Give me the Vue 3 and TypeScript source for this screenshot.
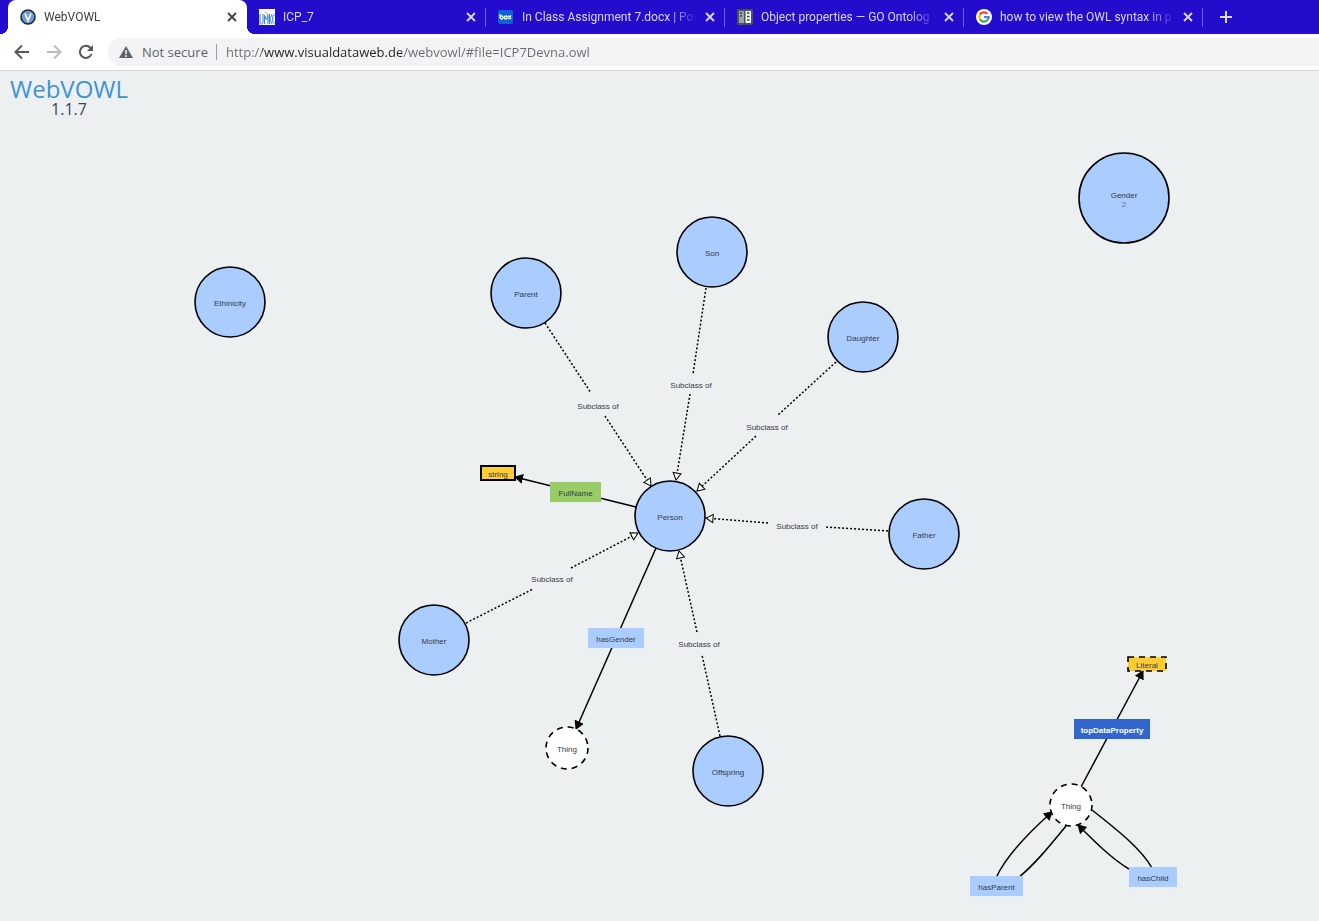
<script setup lang="ts">
import { ref } from 'vue'

interface Tab { id: string; title: string }
interface ClassNode { label: string; x: number; y: number; r: number; kind: 'class' | 'thing'; count?: number }
interface Box { label: string; x: number; y: number; w: number; h: number; kind: string }
interface Edge { d: string; kind: 'solid' | 'dotted'; arrow?: 'filled' | 'hollow' }
interface Caption { x: number; y: number }

const tabs: Tab[] = [
  { id: 'vowl', title: 'WebVOWL' },
  { id: 'umkc', title: 'ICP_7' },
  { id: 'box', title: 'In Class Assignment 7.docx | Pow' },
  { id: 'go', title: 'Object properties — GO Ontolog' },
  { id: 'google', title: 'how to view the OWL syntax in p' },
]
const active = ref('vowl')
const address = ref('http://www.visualdataweb.de/webvowl/#file=ICP7Devna.owl')

const nodes: ClassNode[] = [
  { label: 'Person', x: 670, y: 516, r: 35, kind: 'class' },
  { label: 'Ethinicity', x: 230, y: 302, r: 35, kind: 'class' },
  { label: 'Parent', x: 526, y: 293, r: 35, kind: 'class' },
  { label: 'Son', x: 712, y: 252, r: 35, kind: 'class' },
  { label: 'Daughter', x: 863, y: 337, r: 35, kind: 'class' },
  { label: 'Father', x: 924, y: 534, r: 35, kind: 'class' },
  { label: 'Mother', x: 434, y: 640, r: 35, kind: 'class' },
  { label: 'Offspring', x: 728, y: 771, r: 35, kind: 'class' },
  { label: 'Gender', x: 1124, y: 198, r: 45, kind: 'class', count: 2 },
  { label: 'Thing', x: 567, y: 748, r: 21, kind: 'thing' },
  { label: 'Thing', x: 1071, y: 805, r: 21, kind: 'thing' },
]

const boxes: Box[] = [
  { label: 'string', x: 481, y: 466, w: 34, h: 14, kind: 'datatype' },
  { label: 'Literal', x: 1128, y: 657, w: 38, h: 14, kind: 'literal' },
  { label: 'FullName', x: 550, y: 482, w: 51, h: 20, kind: 'data-property' },
  { label: 'hasGender', x: 588, y: 628, w: 56, h: 20, kind: 'object-property' },
  { label: 'topDataProperty', x: 1074, y: 719, w: 76, h: 20, kind: 'external' },
  { label: 'hasParent', x: 970, y: 876, w: 53, h: 20, kind: 'object-property' },
  { label: 'hasChild', x: 1129, y: 867, w: 48, h: 20, kind: 'object-property' },
]

const edges: Edge[] = [
  { d: 'M545 323L591 393', kind: 'dotted' },
  { d: 'M605 416L651 486', kind: 'dotted', arrow: 'hollow' },
  { d: 'M706 288L693 374', kind: 'dotted' },
  { d: 'M690 394L676 480', kind: 'dotted', arrow: 'hollow' },
  { d: 'M836 362L777 416', kind: 'dotted' },
  { d: 'M756 436L697 491', kind: 'dotted', arrow: 'hollow' },
  { d: 'M888 531L826 527', kind: 'dotted' },
  { d: 'M768 523L706 518', kind: 'dotted', arrow: 'hollow' },
  { d: 'M466 623L533 589', kind: 'dotted' },
  { d: 'M571 568L638 533', kind: 'dotted', arrow: 'hollow' },
  { d: 'M720 736L702 655', kind: 'dotted' },
  { d: 'M697 632L679 551', kind: 'dotted', arrow: 'hollow' },
  { d: 'M636 507L515 477', kind: 'solid', arrow: 'filled' },
  { d: 'M656 548L576 729', kind: 'solid', arrow: 'filled' },
  { d: 'M1081 787L1143 671', kind: 'solid', arrow: 'filled' },
  { d: 'M996 878C1006 856 1026 835 1052 812', kind: 'solid', arrow: 'filled' },
  { d: 'M1066 826C1048 848 1034 865 1018 878', kind: 'solid' },
  { d: 'M1092 810C1120 832 1142 850 1152 868', kind: 'solid' },
  { d: 'M1129 869C1112 859 1094 841 1078 825', kind: 'solid', arrow: 'filled' },
]

const subclassCaptions: Caption[] = [
  { x: 598, y: 409 },
  { x: 691, y: 388 },
  { x: 767, y: 430 },
  { x: 797, y: 529 },
  { x: 552, y: 582 },
  { x: 699, y: 647 },
]
</script>

<template>
  <div class="window">
    <header>
      <nav class="tab-strip" aria-label="Tabs">
        <div v-for="t in tabs" :key="t.id" class="tab" :class="{ active: t.id === active }">
          <button class="tab-main" type="button" @click="active = t.id">
            <svg class="favicon" viewBox="0 0 16 16" aria-hidden="true">
              <g v-if="t.id === 'vowl'">
                <circle cx="8" cy="8" r="7" fill="#6d9bd3" stroke="#1d2c42" stroke-width="1.6" />
                <path d="M5 4.5L8 11.5L11 4.5" fill="none" stroke="#fff" stroke-width="1.8" />
              </g>
              <g v-else-if="t.id === 'umkc'">
                <rect width="16" height="16" fill="#f6faff" />
                <path d="M1 5V13Q1 15 2.5 15Q4 15 4 13V5M5.5 15V6L7.500 11L9 6V15M10.5 5V15M13 5L10.8 10L13 15M15.5 6Q13.5 5 13.5 10Q13.5 15 15.5 14" fill="none" stroke="#3f86cf" stroke-width="1" />
                <path d="M6 3L8 5L10 6" fill="none" stroke="#e4c64b" stroke-width="1.5" />
              </g>
              <g v-else-if="t.id === 'box'">
                <rect y="1" width="15" height="14" rx="2" fill="#0b62d6" />
                <g fill="none" stroke="#fff" stroke-width="1.3">
                  <path d="M2 5V8.5M10.3 6.5L13 10.2M13 6.5L10.3 10.2" />
                  <circle cx="3.6" cy="8.5" r="1.5" />
                  <circle cx="7.7" cy="8.5" r="1.5" />
                </g>
              </g>
              <g v-else-if="t.id === 'go'">
                <rect width="16" height="16" rx="1" fill="#4b5359" />
                <path d="M2 2H7V14H2Z" fill="#9aa6a4" />
                <path d="M8.5 2H14V14H8.5Z" fill="#f4f6f4" />
                <path d="M3 4H5M3 7H5M10 4H12.5M10 7.5H12.5M10 11H12.5" stroke="#3b4246" stroke-width="1.5" />
              </g>
              <g v-else>
                <circle cx="8" cy="8" r="8" fill="#fff" />
                <g fill="none" stroke-width="2.2">
                  <path d="M4 5.6A4.7 4.7 0 0 1 11.4 4.7" stroke="#ea4335" />
                  <path d="M4 10.4A4.7 4.7 0 0 1 4 5.6" stroke="#fbbc05" />
                  <path d="M11.1 11.5A4.7 4.7 0 0 1 4 10.4" stroke="#34a853" />
                  <path d="M8 8H12.7A4.7 4.7 0 0 1 11.1 11.5" stroke="#4285f4" />
                </g>
              </g>
            </svg>
            <span class="tab-title">{{ t.title }}</span>
          </button>
          <button class="close" type="button" :aria-label="`Close ${t.title}`">
            <svg viewBox="0 0 16 16" aria-hidden="true"><path d="M4 4L12 12M12 4L4 12" /></svg>
          </button>
        </div>
        <button class="new-tab" type="button" aria-label="New tab">
          <svg viewBox="0 0 16 16" aria-hidden="true"><path d="M8 2V14M2 8H14" /></svg>
        </button>
      </nav>

      <div class="toolbar">
        <div class="tools">
          <button class="tool" type="button" aria-label="Back">
            <svg viewBox="0 0 16 16" aria-hidden="true"><path d="M15 8H2M8 1.5L1.5 8L8 14.5" /></svg>
          </button>
          <button class="tool" type="button" aria-label="Forward" disabled>
            <svg viewBox="0 0 16 16" aria-hidden="true"><path d="M1 8H14M8 1.5L14.5 8L8 14.5" /></svg>
          </button>
          <button class="tool" type="button" aria-label="Reload">
            <svg viewBox="0 0 16 16" aria-hidden="true">
              <path d="M13.5 10A6 6 0 1 1 12.3 3.8L14 5.5" />
              <path class="tip" d="M15 1V7H9Z" />
            </svg>
          </button>
        </div>
        <div class="omnibox">
          <svg class="warning" viewBox="0 0 16 14" aria-hidden="true">
            <path d="M8 1L15 13H1Z" fill="#5f6368" />
            <path d="M8 5V9M8 10V12" stroke="#f1f3f4" stroke-width="1.6" />
          </svg>
          <label class="security" for="address">Not secure</label>
          <input id="address" v-model="address" class="address" type="text" spellcheck="false" />
        </div>
      </div>
    </header>

    <main class="canvas">
      <svg class="graph" viewBox="0 71 1319 850" preserveAspectRatio="xMinYMin meet" role="img" aria-label="Ontology graph">
        <defs>
          <marker id="filled" viewBox="0 -6 10 12" refX="8" refY="0" markerWidth="10" markerHeight="12" markerUnits="userSpaceOnUse" orient="auto">
            <path d="M0 -5L9 0L0 5Z" />
          </marker>
          <marker id="hollow" viewBox="-1 -6 10 12" refX="7" refY="0" markerWidth="10" markerHeight="12" markerUnits="userSpaceOnUse" orient="auto">
            <path class="hollow-tip" d="M0 -4L7 0L0 4Z" />
          </marker>
        </defs>

        <path
          v-for="(e, i) in edges"
          :key="`edge-${i}`"
          :d="e.d"
          :class="['edge', e.kind]"
          :marker-end="e.arrow ? `url(#${e.arrow})` : undefined"
        />

        <g v-for="(n, i) in nodes" :key="`node-${i}`">
          <circle :cx="n.x" :cy="n.y" :r="n.r" :class="['node', n.kind]" />
          <text :x="n.x" :y="n.count ? n.y : n.y + 4">{{ n.label }}</text>
          <text v-if="n.count" class="count" :x="n.x" :y="n.y + 9">{{ n.count }}</text>
        </g>

        <g v-for="b in boxes" :key="b.label" :class="['box', b.kind]">
          <rect :x="b.x" :y="b.y" :width="b.w" :height="b.h" />
          <text :x="b.x + b.w / 2" :y="b.y + b.h / 2 + 4">{{ b.label }}</text>
        </g>

        <text v-for="(c, i) in subclassCaptions" :key="`caption-${i}`" :x="c.x" :y="c.y">Subclass of</text>
      </svg>

      <div class="brand">
        <a class="brand-name" href="#">WebVOWL</a>
        <span class="version">1.1.7</span>
      </div>
    </main>
  </div>
</template>

<style>
body {
  margin: 0;
  background: #ecf0f1;
}
</style>

<style scoped>
.window {
  display: flex;
  flex-direction: column;
  min-height: 100vh;
  overflow: hidden;
  font-family: "Open Sans", "Noto Sans", sans-serif;
}

button {
  padding: 0;
  border: 0;
  background: none;
  font: inherit;
  color: inherit;
}

.tab-strip {
  display: flex;
  height: 34px;
  padding-left: 8px;
  background: #230ccb;
  color: #dcd8f8;
  overflow: hidden;
}

.tab {
  position: relative;
  display: flex;
  align-items: center;
  gap: 5px;
  box-sizing: border-box;
  flex: 0 1 239px;
  min-width: 0;
  height: 34px;
  padding: 0 7px 0 12px;
}

.tab:not(.active)::after {
  content: "";
  position: absolute;
  right: 0;
  top: 8px;
  width: 1px;
  height: 19px;
  background: #6e60de;
}

.tab.active {
  border-radius: 8px 8px 0 0;
  background: #fff;
  color: #3c4043;
}

.tab.active::before,
.tab.active::after {
  content: "";
  position: absolute;
  bottom: 0;
  width: 8px;
  height: 8px;
}

.tab.active::before {
  left: -8px;
  background: radial-gradient(circle at 0 0, #230ccb 8px, #fff 8px);
}

.tab.active::after {
  right: -8px;
  background: radial-gradient(circle at 100% 0, #230ccb 8px, #fff 8px);
}

.tab-main {
  display: flex;
  align-items: center;
  gap: 8px;
  flex: 1;
  min-width: 0;
  height: 34px;
  text-align: left;
}

.favicon {
  flex: none;
  width: 16px;
  height: 16px;
}

.tab-title {
  flex: 1;
  overflow: hidden;
  white-space: nowrap;
  font-family: Roboto, "Open Sans", sans-serif;
  font-size: 12px;
  line-height: 16px;
  mask-image: linear-gradient(to right, #000 calc(100% - 28px), transparent);
}

.close,
.new-tab {
  display: grid;
  place-items: center;
  flex: none;
  width: 16px;
}

.close svg,
.new-tab svg {
  width: 16px;
  height: 16px;
  fill: none;
  stroke: currentColor;
  stroke-width: 2;
}

.close svg {
  stroke-width: 1.8;
}

.new-tab {
  margin-left: 15px;
}

.toolbar {
  display: flex;
  align-items: center;
  gap: 14px;
  height: 36px;
  padding-left: 14px;
  border-bottom: 1px solid #d6d9db;
  background: #fff;
}

.tools {
  display: flex;
  gap: 16px;
}

.tool {
  display: grid;
  place-items: center;
  flex: none;
  width: 16px;
  height: 28px;
  color: #55585c;
}

.tool:disabled {
  color: #b9bbbe;
}

.tool svg {
  width: 16px;
  height: 16px;
  fill: none;
  stroke: currentColor;
  stroke-width: 2;
}

.tool .tip {
  fill: currentColor;
  stroke: none;
}

.omnibox {
  display: flex;
  align-items: center;
  flex: 1;
  height: 28px;
  padding-left: 10px;
  border-radius: 14px 0 0 14px;
  background: #f1f3f4;
  color: #5f6368;
  font-size: 13px;
}

.warning {
  width: 16px;
  height: 14px;
}

.security {
  margin-left: 8px;
  padding-right: 8px;
  border-right: 1px solid #9aa0a6;
  line-height: 16px;
  white-space: nowrap;
}

.address {
  flex: 1;
  min-width: 0;
  padding: 0 0 0 9px;
  border: 0;
  outline: 0;
  /* The host is darker than the rest of the address. */
  background: linear-gradient(to right, #696d71 45px, #202124 45px 185px, #696d71 185px);
  background-clip: text;
  color: transparent;
  caret-color: #202124;
  font: inherit;
  line-height: 20px;
}

.canvas {
  display: grid;
  flex: 1;
  align-items: start;
  background: #ecf0f1;
}

.graph,
.brand {
  grid-area: 1 / 1;
}

.graph {
  display: block;
  width: 100%;
}

.brand {
  justify-self: start;
  display: flex;
  flex-direction: column;
  align-items: center;
  padding: 6px 10px;
}

.brand-name {
  color: #3d94d1;
  font-size: 24px;
  font-weight: 500;
  line-height: 24px;
  text-decoration: none;
}

.version {
  color: #34495e;
  font-size: 16px;
  font-weight: 500;
  line-height: 16px;
}

.graph text {
  fill: #333c46;
  font-family: "Liberation Sans", Arial, sans-serif;
  font-size: 8px;
  text-anchor: middle;
}

.graph .count {
  fill: #65778f;
}

.edge {
  fill: none;
  stroke: #000;
  stroke-width: 1.5;
}

.edge.dotted {
  stroke-dasharray: 2 2;
}

.hollow-tip {
  fill: #fff;
  stroke: #000;
  stroke-width: 1;
}

.node {
  stroke: #000;
  stroke-width: 1.6;
}

.node.class {
  fill: #acf;
}

.node.thing {
  fill: #fff;
  stroke-dasharray: 6 5;
}

.box.datatype rect,
.box.literal rect {
  fill: #fc3;
  stroke: #000;
  stroke-width: 2;
}

.box.literal rect {
  stroke-width: 1.6;
  stroke-dasharray: 6 5;
}

.box.data-property rect {
  fill: #9c6;
}

.box.object-property rect {
  fill: #acf;
}

.box.external rect {
  fill: #36c;
}

.graph .box.external text {
  fill: #fff;
  font-weight: bold;
}
</style>
